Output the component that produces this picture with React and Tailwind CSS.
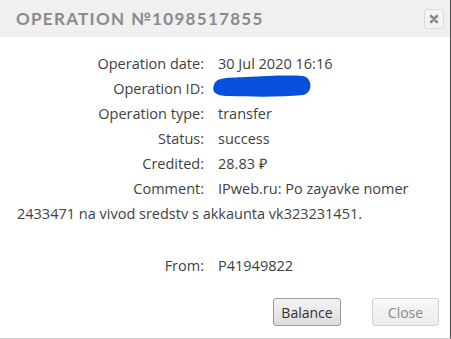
import React from 'react';

const rows = [
  { label: 'Operation date:', value: '30 Jul 2020 16:16' },
  { label: 'Operation ID:', value: 'hidden' },
  { label: 'Operation type:', value: 'transfer' },
  { label: 'Status:', value: 'success' },
  { label: 'Credited:', value: '28.83 ₽' },
];

// blue marker stroke that hides the id
const Scribble = () => (
  <svg width="102" height="22" viewBox="0 0 102 22" className="absolute left-[-7px] top-[-6px]">
    <path
      d="M3 10 C 5 2, 16 3, 35 2 C 56 1, 76 0, 92 1 C 102 3, 102 18, 92 20 C 72 22, 45 22, 18 21 C 2 21, 1 15, 3 10 Z"
      fill="#0650dc"
    />
  </svg>
);

const App = () => {
  return (
    <div className="w-[451px] h-[339px] bg-white border-r border-r-[#4a4a4a] border-b border-b-[#cfcfcf] flex flex-col font-['Open_Sans',sans-serif] text-[#3f3f3f]">
      {/* Header */}
      <div className="h-[37px] bg-[#f0f0f0] flex items-center justify-between pl-[16px] pr-[6px]">
        <h2 className="font-['Lato',sans-serif] font-bold text-[17px] tracking-[1.3px] text-[#8a8a8a]">OPERATION №1098517855</h2>
        <button className="w-[20px] h-[20px] border border-[#d8d8d8] rounded-[3px] bg-[#f4f4f4] flex items-center justify-center">
          <svg width="10" height="10" viewBox="0 0 10 10">
            <path d="M2 2 L8 8 M8 2 L2 8" stroke="#8a8a8a" strokeWidth="2.6" strokeLinecap="round" />
          </svg>
        </button>
      </div>

      {/* Body */}
      <div className="flex-1 pl-[17px] pr-[12px] pt-[14px] text-[14.5px] leading-[25px]">
        {rows.map((r) => (
          <div key={r.label}>
            <span className="inline-block w-[188px] text-right pr-[1px]">{r.label}</span>
            {r.value === 'hidden' ? (
              <span className="relative inline-block ml-[13px] w-[90px] h-[18px] align-middle">
                <Scribble />
              </span>
            ) : (
              <span className="ml-[13px]">{r.value}</span>
            )}
          </div>
        ))}
        <div>
          <span className="inline-block w-[188px] text-right pr-[1px]">Comment:</span>
          <span className="ml-[13px]">IPweb.ru: Po zayavke nomer 2433471 na vivod sredstv s akkaunta vk323231451.</span>
        </div>
        <div className="mt-[27px]">
          <span className="inline-block w-[188px] text-right pr-[1px]">From:</span>
          <span className="ml-[13px]">P41949822</span>
        </div>
      </div>

      {/* Footer */}
      <div className="flex justify-end gap-[31px] pr-[11px] pb-[12px]">
        <button className="w-[68px] h-[28px] border border-[#9a9a9a] rounded-[3px] bg-gradient-to-b from-[#f4f4f4] to-[#dcdcdc] text-[14px] text-[#333]">Balance</button>
        <button className="w-[67px] h-[28px] border border-[#d0d0d0] rounded-[3px] bg-gradient-to-b from-[#f8f8f8] to-[#ececec] text-[14px] text-[#8a8a8a]">Close</button>
      </div>
    </div>
  );
};

export default App;
